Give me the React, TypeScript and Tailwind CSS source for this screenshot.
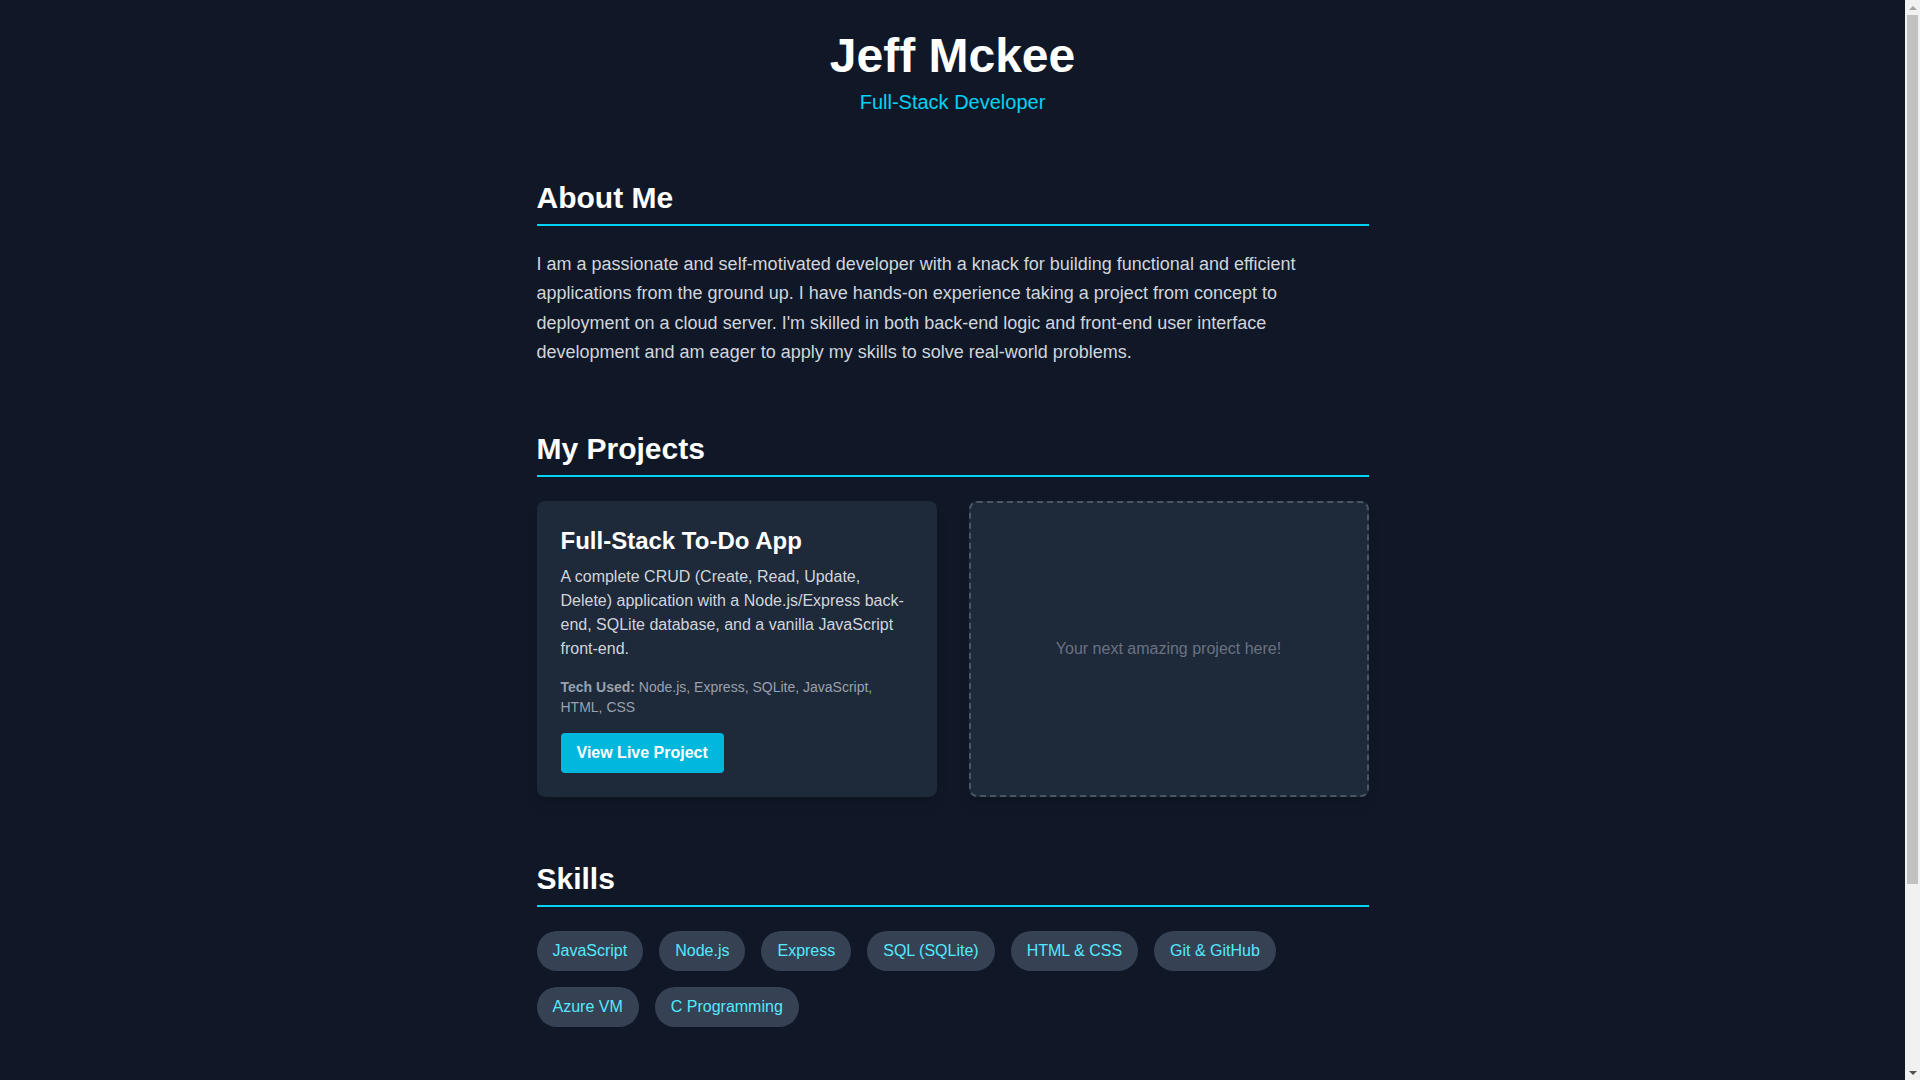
const skills = [
  'JavaScript',
  'Node.js',
  'Express',
  'SQL (SQLite)',
  'HTML & CSS',
  'Git & GitHub',
  'Azure VM',
  'C Programming',
];

function SectionTitle({ children }: { children: string }) {
  return (
    <h2 className="mb-6 border-b-2 border-cyan-400 pb-2 text-3xl font-bold text-white">
      {children}
    </h2>
  );
}

// the reference shows the browser's classic scrollbar on the right
function ScrollBar() {
  return (
    <div className="flex h-screen w-[15px] shrink-0 flex-col bg-[#f1f1f1]">
      <div className="flex h-[15px] items-center justify-center">
        <span className="h-0 w-0 border-x-[4px] border-b-[4px] border-x-transparent border-b-[#a3a3a3]" />
      </div>
      <div className="mx-[2px] h-[869px] bg-[#c1c1c1]" />
      <div className="flex-1" />
      <div className="flex h-[15px] items-center justify-center">
        <span className="h-0 w-0 border-x-[4px] border-t-[4px] border-x-transparent border-t-[#505050]" />
      </div>
    </div>
  );
}

export default function App() {
  return (
    <div className="flex min-h-screen bg-gray-900 font-['Liberation_Sans',Arial,sans-serif] text-gray-300">
      <main className="flex-1">
        <div className="mx-auto max-w-4xl px-8 pt-8">
          <header className="mb-16 text-center">
            <h1 className="text-5xl font-bold text-white">Jeff Mckee</h1>
            <p className="mt-2 text-xl text-cyan-400">Full-Stack Developer</p>
          </header>

          <section className="mb-16">
            <SectionTitle>About Me</SectionTitle>
            <p className="text-lg leading-relaxed">
              I am a passionate and self-motivated developer with a knack for building functional and efficient
              applications from the ground up. I have hands-on experience taking a project from concept to
              deployment on a cloud server. I'm skilled in both back-end logic and front-end user interface
              development and am eager to apply my skills to solve real-world problems.
            </p>
          </section>

          <section className="mb-16">
            <SectionTitle>My Projects</SectionTitle>
            <div className="grid grid-cols-2 gap-8">
              <div className="rounded-lg bg-gray-800 p-6 shadow-lg">
                <h3 className="mb-2 text-2xl font-bold text-white">Full-Stack To-Do App</h3>
                <p className="mb-4">
                  A complete CRUD (Create, Read, Update, Delete) application with a Node.js/Express back-end,
                  SQLite database, and a vanilla JavaScript front-end.
                </p>
                <p className="text-sm text-gray-400">
                  <strong>Tech Used:</strong> Node.js, Express, SQLite, JavaScript, HTML, CSS
                </p>
                <a
                  href="#"
                  className="mt-4 inline-block rounded bg-cyan-500 px-4 py-2 font-bold text-white hover:bg-cyan-600"
                >
                  View Live Project
                </a>
              </div>
              <div className="flex items-center justify-center rounded-lg border-2 border-dashed border-gray-600 bg-gray-800 shadow-lg">
                <p className="text-gray-500">Your next amazing project here!</p>
              </div>
            </div>
          </section>

          <section className="mb-16">
            <SectionTitle>Skills</SectionTitle>
            <div className="flex flex-wrap gap-4">
              {skills.map((skill) => (
                <span key={skill} className="rounded-full bg-gray-700 px-4 py-2 text-cyan-300">
                  {skill}
                </span>
              ))}
            </div>
          </section>
        </div>
      </main>
      <ScrollBar />
    </div>
  );
}
